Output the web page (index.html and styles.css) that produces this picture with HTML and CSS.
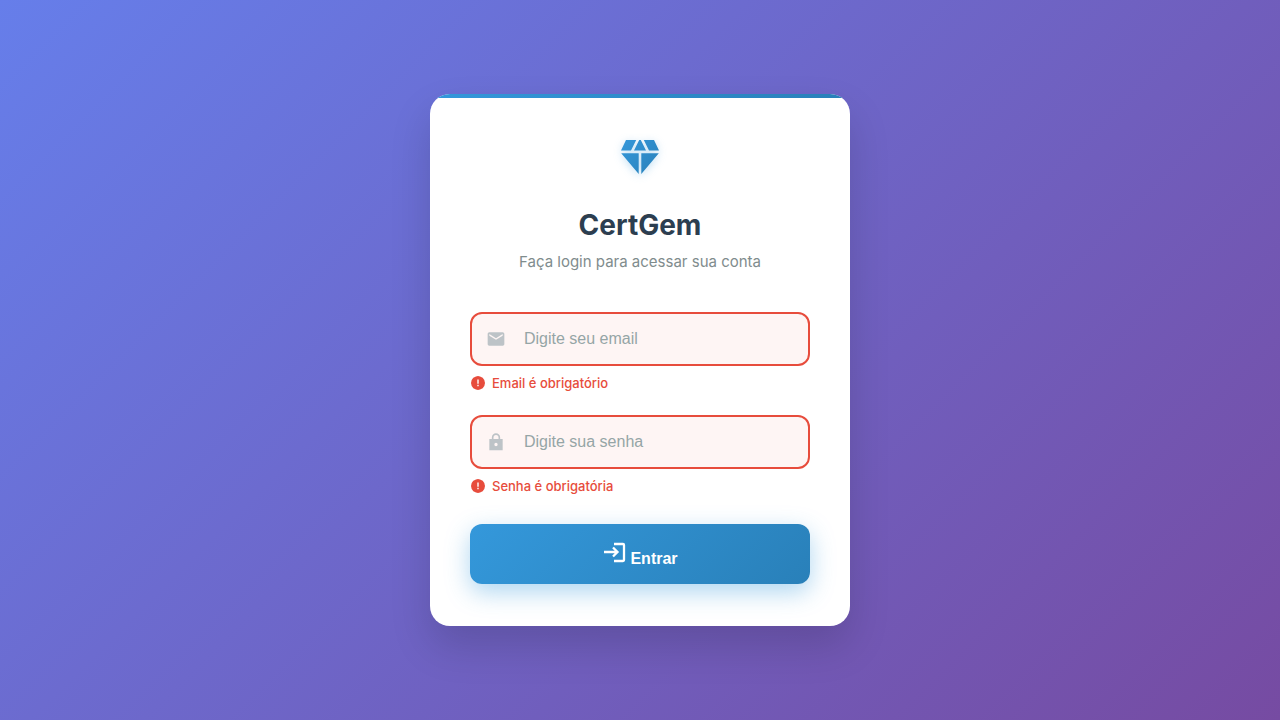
FILE: index.html
```html
<!DOCTYPE html>
<html lang="pt-BR">
<head>
<meta charset="utf-8">
<meta name="viewport" content="width=device-width, initial-scale=1">
<title>CertGem</title>
<link rel="stylesheet" href="styles.css">
</head>
<body>
<main class="card">
  <header class="brand">
    <svg class="gem" viewBox="0 0 40 36" aria-hidden="true">
      <defs>
        <linearGradient id="gem-fill" x1="0" y1="0" x2="40" y2="36" gradientUnits="userSpaceOnUse">
          <stop offset="0" stop-color="#3498db"/>
          <stop offset="1" stop-color="#2980b9"/>
        </linearGradient>
      </defs>
      <path fill="url(#gem-fill)" d="M6 1H16.2L11 11.5H1ZM19.2 1H20.8L26 11.5H14ZM23.8 1H34L39 11.5H29ZM1.2 14.2H18.7V35ZM21.3 14.2H38.8L21.3 35Z"/>
    </svg>
    <h1 class="title">CertGem</h1>
    <p class="subtitle">Faça login para acessar sua conta</p>
  </header>
  <form class="form" novalidate>
    <div class="field">
      <div class="control">
        <svg class="control-icon" viewBox="0 0 24 24" aria-hidden="true"><path fill="currentColor" d="M20 4H4c-1.100 0-2 .9-2 2v12c0 1.100.9 2 2 2h16c1.100 0 2-.9 2-2V6c0-1.100-.9-2-2-2zm0 4-8 5-8-5V6l8 5 8-5z"/></svg>
        <input class="input" id="email" type="email" placeholder="Digite seu email" aria-label="Email" aria-invalid="true" aria-describedby="email-error">
      </div>
      <p class="error" id="email-error">
        <svg class="error-icon" viewBox="0 0 16 16" aria-hidden="true"><path fill="currentColor" d="M8 1 10 1.500 12.700 2.800 14.300 5 15 8 14.300 11 12.700 13.200 10 14.500 8 15 6 14.500 3.300 13.200 1.700 11 1 8 1.700 5 3.300 2.800 6 1.500Z"/><path fill="#fff" d="M7.300 4.500h1.400v4.200H7.300zM7.300 9.700h1.400v1.500H7.300z"/></svg>
        Email é obrigatório
      </p>
    </div>
    <div class="field">
      <div class="control">
        <svg class="control-icon" viewBox="0 0 24 24" aria-hidden="true"><path fill="currentColor" fill-rule="evenodd" d="M20 8.500H17V6.500a5 5 0 0 0-10 0V8.500H4V22H20ZM9 8.500V6.500a3 3 0 0 1 6 0V8.500ZM12 13a2 2 0 1 1 0 4 2 2 0 0 1 0-4Z"/></svg>
        <input class="input" id="senha" type="password" placeholder="Digite sua senha" aria-label="Senha" aria-invalid="true" aria-describedby="senha-error">
      </div>
      <p class="error" id="senha-error">
        <svg class="error-icon" viewBox="0 0 16 16" aria-hidden="true"><path fill="currentColor" d="M8 1 10 1.500 12.700 2.800 14.300 5 15 8 14.300 11 12.700 13.200 10 14.500 8 15 6 14.500 3.300 13.200 1.700 11 1 8 1.700 5 3.300 2.800 6 1.500Z"/><path fill="#fff" d="M7.300 4.500h1.400v4.200H7.300zM7.300 9.700h1.400v1.500H7.300z"/></svg>
        Senha é obrigatória
      </p>
    </div>
    <button class="submit" type="submit">
      <svg class="submit-icon" viewBox="0 0 24 24" aria-hidden="true"><path fill="none" stroke="currentColor" stroke-width="2.300" d="M12 4H21Q22 4 22 5V20Q22 21 21 21H12M2 12H15M11 7.500 15.500 12 11 16.500"/></svg>
      <span>Entrar</span>
    </button>
  </form>
</main>
</body>
</html>
```
FILE: styles.css
```css
* {
  box-sizing: border-box;
}

body {
  margin: 0;
  min-height: 100vh;
  padding: 20px;
  display: flex;
  align-items: center;
  justify-content: center;
  background: linear-gradient(135deg, #667eea 0%, #764ba2 100%);
  font-family: Inter, "Liberation Sans", sans-serif;
}

.card {
  position: relative;
  width: 100%;
  max-width: 420px;
  padding: 45px 40px 42px;
  overflow: hidden;
  border-radius: 20px;
  background: #fff;
  box-shadow: 0 20px 40px rgba(0, 0, 0, 0.15);
}

.card::before {
  content: "";
  position: absolute;
  top: 0;
  left: 0;
  right: 0;
  height: 4px;
  background: linear-gradient(90deg, #3498db, #2980b9);
}

.brand {
  display: flex;
  flex-direction: column;
  align-items: center;
  margin-bottom: 38px;
  text-align: center;
}

.gem {
  width: 40px;
  height: 36px;
  margin-bottom: 32px;
  filter: drop-shadow(0 2px 4px rgba(52, 152, 219, 0.3));
}

.title {
  margin: 0 0 7px;
  color: #2c3e50;
  font-size: 28px;
  font-weight: 700;
  line-height: 36px;
}

.subtitle {
  margin: 0;
  color: #7f8c8d;
  font-size: 15px;
  line-height: 24px;
}

.form {
  display: flex;
  flex-direction: column;
}

.field {
  margin-bottom: 22px;
}

.control {
  display: flex;
  align-items: center;
  gap: 18px;
  height: 54px;
  padding: 0 14px;
  border: 2px solid #e74c3c;
  border-radius: 12px;
  background: #fef5f4;
}

.control-icon {
  flex: none;
  width: 20px;
  height: 20px;
  color: #bdc3c7;
}

.input {
  flex: 1;
  min-width: 0;
  padding: 0;
  border: 0;
  outline: 0;
  background: transparent;
  color: #2c3e50;
  font-family: "Liberation Sans", Arial, sans-serif;
  font-size: 16px;
}

.input::placeholder {
  color: #95a5a6;
  opacity: 1;
}

.error {
  display: flex;
  align-items: center;
  gap: 6px;
  margin: 7px 0 0;
  color: #e74c3c;
  font-size: 13px;
  font-weight: 500;
  line-height: 20px;
}

.error-icon {
  width: 16px;
  height: 16px;
}

.submit {
  display: flex;
  align-items: center;
  justify-content: center;
  gap: 4px;
  height: 60px;
  margin-top: 6px;
  padding: 0 16px;
  border: 0;
  border-radius: 12px;
  background: linear-gradient(135deg, #3498db 0%, #2980b9 100%);
  box-shadow: 0 8px 25px rgba(52, 152, 219, 0.4);
  color: #fff;
  font-family: "Liberation Sans", Arial, sans-serif;
  font-size: 16px;
  font-weight: 600;
  cursor: pointer;
}

.submit-icon {
  width: 24px;
  height: 24px;
  margin-bottom: 4px;
}

.submit span {
  padding-top: 10px;
}
```
